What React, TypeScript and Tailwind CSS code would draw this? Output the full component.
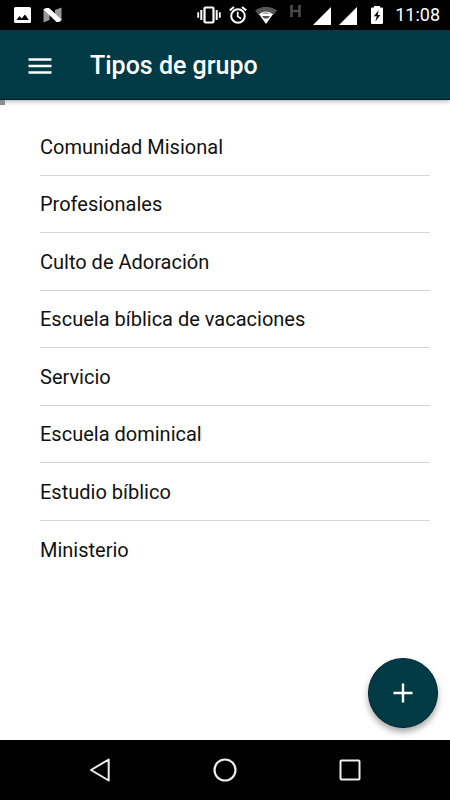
import { useState } from 'react';
import type { FC, ReactNode } from 'react';

const groupTypes = [
    'Comunidad Misional',
    'Profesionales',
    'Culto de Adoración',
    'Escuela bíblica de vacaciones',
    'Servicio',
    'Escuela dominical',
    'Estudio bíblico',
    'Ministerio',
];

const SignalIcon: FC = () => (
    <svg aria-hidden="true" className="h-[18px] w-[18px]" fill="white" viewBox="0 0 18 18">
        <path d="M18 0v18H0z" />
    </svg>
);

const StatusBar: FC = () => (
    <div className="flex h-[30px] shrink-0 items-center justify-between bg-black pr-[10px] pl-[14px] text-white">
        <div className="flex items-center gap-3">
            <svg aria-hidden="true" className="h-4 w-[17px]" viewBox="0 0 17 16">
                <rect fill="white" height="16" rx="1.5" width="17" />
                <path d="M2.5 13l3-4 2.2 2.4L11 7.5l3.8 5.5z" fill="black" />
            </svg>
            <svg aria-hidden="true" className="h-4 w-[19px]" viewBox="0 0 19 16">
                <path d="M.5 2v13.5L6.5 13V6zM18.5.5V14L12 10V3z" fill="#999" />
                <path d="M.5 2.5Q2 .5 4.5 1H6L18.5 12.5Q17.5 15 15 15H13.5z" fill="white" />
            </svg>
        </div>

        <div className="flex items-center">
            <svg aria-hidden="true" className="h-5 w-6" fill="none" stroke="white" viewBox="0 0 24 20">
                <rect height="15" rx="1" strokeWidth="2.2" width="9" x="7.5" y="2.5" />
                <path d="M4.3 5v10M19.7 5v10" strokeWidth="2" />
                <path d="M1.2 7.3v5.4M22.8 7.3v5.4" strokeWidth="1.8" />
            </svg>
            <svg aria-hidden="true" className="ml-2 h-[18px] w-[18px]" fill="none" stroke="white" viewBox="0 0 18 18">
                <circle cx="9" cy="10" r="6.8" strokeWidth="2" />
                <path d="M.8 4.4L5 1M17.2 4.4L13 1" strokeWidth="2" />
                <path d="M8.7 5.8v4.6l3.4 2.3" strokeWidth="1.7" />
            </svg>
            <svg aria-hidden="true" className="ml-2 h-[18px] w-[22px]" viewBox="0 0 22 18">
                <path d="M0 4.5Q11-3 22 4.5L18.5 9h-15z" fill="#555" />
                <path d="M4 8.3Q11 2.5 18 8.3L11 18z" fill="white" />
                <path d="M7 7.5q4-2 8 0zM7 10h8l-2 2.6H9z" fill="#555" />
            </svg>
            <svg aria-hidden="true" className="mb-2 ml-[13px] h-3 w-[11px]" viewBox="0 0 11 12">
                <path d="M1.5 0v12M9.5 0v12M1.5 6h8" fill="none" stroke="#4a4a4a" strokeWidth="2.6" />
            </svg>
            <div className="mt-px ml-3 flex gap-2">
                <SignalIcon />
                <SignalIcon />
            </div>
            <svg aria-hidden="true" className="ml-[14px] h-[18px] w-3" viewBox="0 0 12 18">
                <path d="M1 1.5h2V0h6v1.5h2q1 0 1 1V17q0 1-1 1H1q-1 0-1-1V2.5q0-1 1-1z" fill="white" />
                <path d="M7.8 4L2.8 10.2h3L4.3 15.5l5-6.5H6.5z" fill="black" />
            </svg>
            <span className="ml-3 text-lg leading-none">11:08</span>
        </div>
    </div>
);

type IconButtonProps = {
    label: string;
    className: string;
    children: ReactNode;
    onClick?: () => void;
};

const IconButton: FC<IconButtonProps> = ({ label, className, children, onClick }) => (
    <button aria-label={label} className={className} type="button" onClick={onClick}>
        {children}
    </button>
);

const navButtonClass = 'flex h-10 w-10 items-center justify-center';

const NavigationBar: FC = () => (
    <nav aria-label="Navegación" className="flex h-[60px] shrink-0 items-center justify-between bg-black px-20">
        <IconButton className={navButtonClass} label="Atrás">
            <svg aria-hidden="true" className="h-6 w-6" fill="none" viewBox="0 0 24 24">
                <path d="M20.7 1.5v21L3 12z" stroke="#eee" strokeLinejoin="round" strokeWidth="2" />
            </svg>
        </IconButton>
        <IconButton className={navButtonClass} label="Inicio">
            <svg aria-hidden="true" className="h-6 w-6" fill="none" viewBox="0 0 24 24">
                <circle cx="12" cy="12" r="10.5" stroke="#eee" strokeWidth="2.2" />
            </svg>
        </IconButton>
        <IconButton className={navButtonClass} label="Recientes">
            <svg aria-hidden="true" className="h-6 w-6" fill="none" viewBox="0 0 24 24">
                <rect height="19" rx="1" stroke="#eee" strokeWidth="2" width="19" x="2.5" y="2.5" />
            </svg>
        </IconButton>
    </nav>
);

export default function App() {
    const [selected, setSelected] = useState<string | null>(null);

    return (
        <div className="flex min-h-screen flex-col bg-white font-[Roboto,sans-serif]">
            <StatusBar />

            <header className="z-10 flex h-[70px] shrink-0 items-center border-b border-[#001c24] bg-[#003a45] pt-0.5 pl-5 text-white shadow-[0_1px_5px_rgba(0,0,0,0.35)]">
                <IconButton className="flex h-10 w-10 items-center justify-center" label="Menú">
                    <svg aria-hidden="true" className="h-4 w-6" viewBox="0 0 24 16">
                        <path d="M.5 1.5h23M.5 8h23M.5 14.5h23" stroke="white" strokeWidth="2.4" />
                    </svg>
                </IconButton>
                <h1 className="ml-[30px] text-[25px] leading-8 font-medium">Tipos de grupo</h1>
            </header>

            <main className="relative flex-1 pr-5 pb-20 pl-10">
                <div className="absolute top-0 left-0 z-20 h-[5px] w-[5px] bg-[#8c8c8c]" />
                <ul className="mt-[18px] grid h-[460px] grid-rows-8">
                    {groupTypes.map((name) => (
                        <li key={name} className="flex border-b border-[#d6d6d6] last:border-b-0">
                            <button
                                aria-pressed={selected === name}
                                className="w-full pt-px text-left text-xl text-[#111]"
                                type="button"
                                onClick={() => setSelected(name)}
                            >
                                {name}
                            </button>
                        </li>
                    ))}
                </ul>

                <IconButton
                    className="absolute right-3 bottom-3 flex h-[70px] w-[70px] items-center justify-center rounded-full border border-[#00202c] bg-[#003a45] shadow-[0_4px_6px_rgba(0,0,0,0.35)]"
                    label="Añadir tipo de grupo"
                >
                    <svg aria-hidden="true" className="h-5 w-5" viewBox="0 0 20 20">
                        <path d="M10 .5v19M.5 10h19" stroke="white" strokeWidth="2.4" />
                    </svg>
                </IconButton>
            </main>

            <NavigationBar />
        </div>
    );
}
